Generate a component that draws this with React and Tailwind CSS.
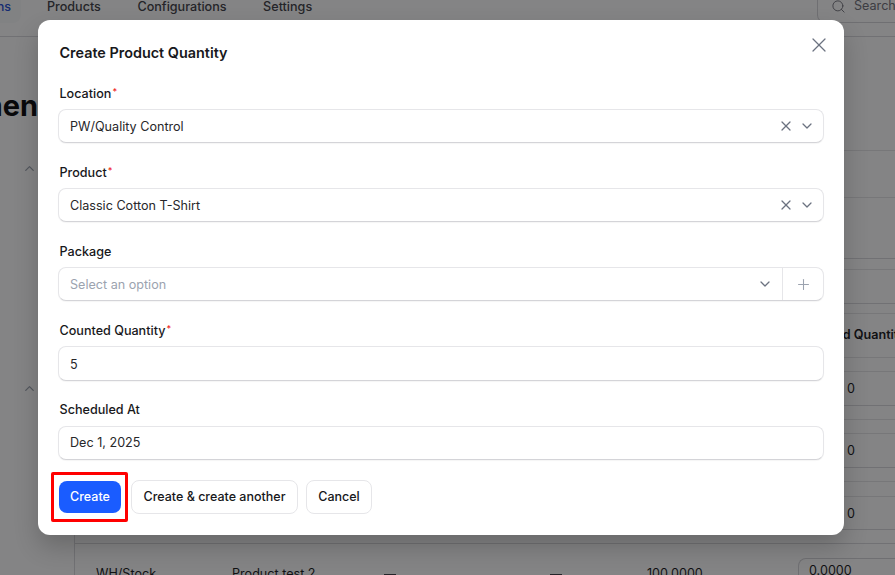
import React from 'react';
import { X, ChevronDown, ChevronUp, Plus, Search } from 'lucide-react';

const Required = () => <sup className="text-[#ef1c1c] text-[9px] ml-px top-[-3px]">*</sup>;

const Field = ({ label, required, children, className = 'h-[34px]', labelClass = 'pt-[3px]' }) => (
  <div className="mb-[19px]">
    <div className={`${labelClass} h-5 mb-1.5 ml-[1.5px] flex items-center text-[12.6px] font-medium text-[#18181b]`}>
      <span>{label}{required && <Required />}</span>
    </div>
    <div className={`${className} flex items-center bg-white rounded-lg border border-[#e6e6e9] border-b-[#d4d4d8] text-[12.6px] text-[#27272a] shadow-[0_1px_1px_rgba(0,0,0,0.04)]`}>
      {children}
    </div>
  </div>
);

const SelectActions = () => (
  <div className="ml-auto flex items-center text-[#6b7280] pr-[8px] gap-[5px]">
    <X className="w-4 h-4" strokeWidth={1.9} />
    <ChevronDown className="w-4 h-4" strokeWidth={1.9} />
  </div>
);

// table rows behind the dialog
const StockRow = ({ height }) => (
  <div className={`${height} border-b border-[#d8d8dc] flex items-center justify-end pr-[42px] pt-[2px] text-[12.6px] text-[#18181b]`}>
    <span className="w-[6px]">0</span>
  </div>
);

const Page = () => (
  <div className="h-[575px] overflow-hidden bg-white font-['Inter',sans-serif]">
    <header className="h-[37px] flex border-b border-[#d8d8dc] text-[12.6px] font-medium text-[#3f3f46]">
      <div className="w-[21px] h-[23px] flex justify-end overflow-hidden bg-gray-50 rounded-br-lg pr-[10px] text-[#1d4ed8] whitespace-nowrap">
        <span className="-mt-[2px]">Operations</span>
      </div>
      <div className="flex gap-[36.5px] ml-[26px] h-[14px] -mt-[2px]">
        <span>Products</span>
        <span>Configurations</span>
        <span>Settings</span>
      </div>
      <div className="ml-auto w-[78px] h-[33px] -mt-[10px] flex items-center gap-2 pl-[13px] border-l border-b border-[#d4d4d8] rounded-bl-lg text-[#71717a] font-normal overflow-hidden">
        <Search className="w-[15px] h-[15px] shrink-0" strokeWidth={1.5} />
        <span>Search</span>
      </div>
    </header>
    <div className="flex">
      <aside className="w-[74px] shrink-0 overflow-hidden">
        <div className="w-[38px] mt-[51px] flex justify-end overflow-hidden text-[29px] leading-9 font-bold text-[#09090b] whitespace-nowrap">
          Adjustmen
        </div>
        <ChevronUp className="w-[15px] h-[15px] ml-[22px] mt-[37px] text-[#9ca3af]" />
        <ChevronUp className="w-[15px] h-[15px] ml-[22px] mt-[205px] text-[#9ca3af]" />
      </aside>
      <section className="flex-1 border-l border-[#d8d8dc]">
        <div className="h-[114px] border-b border-[#e4e4e7]" />
        <div className="h-[47px] border-b border-[#e4e4e7]" />
        <div className="h-[61px] border-b border-[#d8d8dc]" />
        <div className="h-[11px] border-b border-[#e4e4e7]" />
        <div className="h-[34px] border-b border-[#d8d8dc]" />
        <div className="h-[10px] border-b border-[#e4e4e7]" />
        <div className="h-[44px] border-b border-[#e4e4e7] flex items-center justify-end text-[12.6px] font-semibold text-[#18181b] whitespace-nowrap">
          <span className="-mr-[11px]">Counted Quantity</span>
        </div>
        <div className="h-[14px] border-b border-[#e4e4e7]" />
        <StockRow height="h-[34px]" />
        <div className="h-[14px] border-b border-[#e4e4e7]" />
        <div className="h-[14px] border-b border-[#e4e4e7]" />
        <StockRow height="h-[34px]" />
        <div className="h-[14px] border-b border-[#e4e4e7]" />
        <div className="h-[15px] border-b border-[#e4e4e7]" />
        <StockRow height="h-[33px]" />
        <div className="h-[14px] border-b border-[#d8d8dc]" />
        <div className="flex pl-[21px] pt-[21px] text-[12.6px] text-[#18181b]">
          <span className="w-[136px]">WH/Stock</span>
          <span className="w-[152px]">Product test 2</span>
          <span className="w-[12px] h-[10px] bg-[#3f3f46] mt-[9px]" />
          <span className="w-[154px]" />
          <span className="w-[12px] h-[10px] bg-[#3f3f46] mt-[9px]" />
          <span className="ml-[85px] w-[152px]">100.0000</span>
        </div>
      </section>
    </div>
  </div>
);

export default function App() {
  return (
    <div className="relative w-[895px] h-[575px] overflow-hidden font-['Inter',sans-serif]">
      <Page />
      <div className="absolute bottom-0 right-0 w-[97px] h-[17px] pl-[10px] pt-[3px] border-l border-t border-[#d4d4d8] rounded-tl-lg bg-white text-[12.6px] text-[#18181b] overflow-hidden">0.0000</div>

      {/* overlay */}
      <div className="absolute inset-0 bg-[#09090b]/50" />

      {/* dialog */}
      <div className="absolute left-[38px] top-[20px] w-[806px] h-[515px] px-5 pt-5 bg-white rounded-xl shadow-[0_12px_24px_rgba(0,0,0,0.2)]">
        <h2 className="h-[26px] ml-[1.5px] flex items-center text-[14.4px] font-semibold text-[#18181b]">Create Product Quantity</h2>
        <button className="absolute right-[13px] top-[13px] text-[#6b7280]">
          <X className="w-[24px] h-[24px]" strokeWidth={1.25} />
        </button>

        <div className="mt-[17px] pb-px">
          <Field label="Location" required>
            <span className="pl-[11px] pt-[2px]">PW/Quality Control</span>
            <SelectActions />
          </Field>
          <Field label="Product" required>
            <span className="pl-[11px] pt-[2px]">Classic Cotton T-Shirt</span>
            <SelectActions />
          </Field>
          <Field label="Package">
            <span className="pl-[11px] pt-[2px] text-[#9ca3af]">Select an option</span>
            <ChevronDown className="ml-auto mr-[9px] w-4 h-4 text-[#6b7280]" strokeWidth={1.9} />
            <div className="w-[41px] h-full shrink-0 flex items-center justify-center border-l border-[#e6e6e9] text-[#9ca3af]">
              <Plus className="w-[17px] h-[17px]" strokeWidth={1.5} />
            </div>
          </Field>
          <Field label="Counted Quantity" required className="h-[35px]">
            <span className="pl-[11px] pt-[3px]">5</span>
          </Field>
          <Field label="Scheduled At" labelClass="pt-[1px]">
            <span className="pl-[11px]">Dec 1, 2025</span>
          </Field>
        </div>

        <div className="flex items-center text-[12.5px] font-medium">
          <button className="ml-px w-[62px] h-8 rounded-lg bg-[#1a5cff] text-white">Create</button>
          <button className="ml-[10px] w-[167px] h-[34px] rounded-lg border border-[#e6e6e9] text-[#18181b]">Create &amp; create another</button>
          <button className="ml-2 w-[66px] h-[34px] rounded-lg border border-[#e6e6e9] text-[#18181b]">Cancel</button>
        </div>
      </div>

      {/* red annotation around the Create button */}
      <div className="absolute left-[51px] top-[472px] w-[77px] h-[50px] border-[3px] border-[#ff0000] rounded-[2px]" />
    </div>
  );
}
